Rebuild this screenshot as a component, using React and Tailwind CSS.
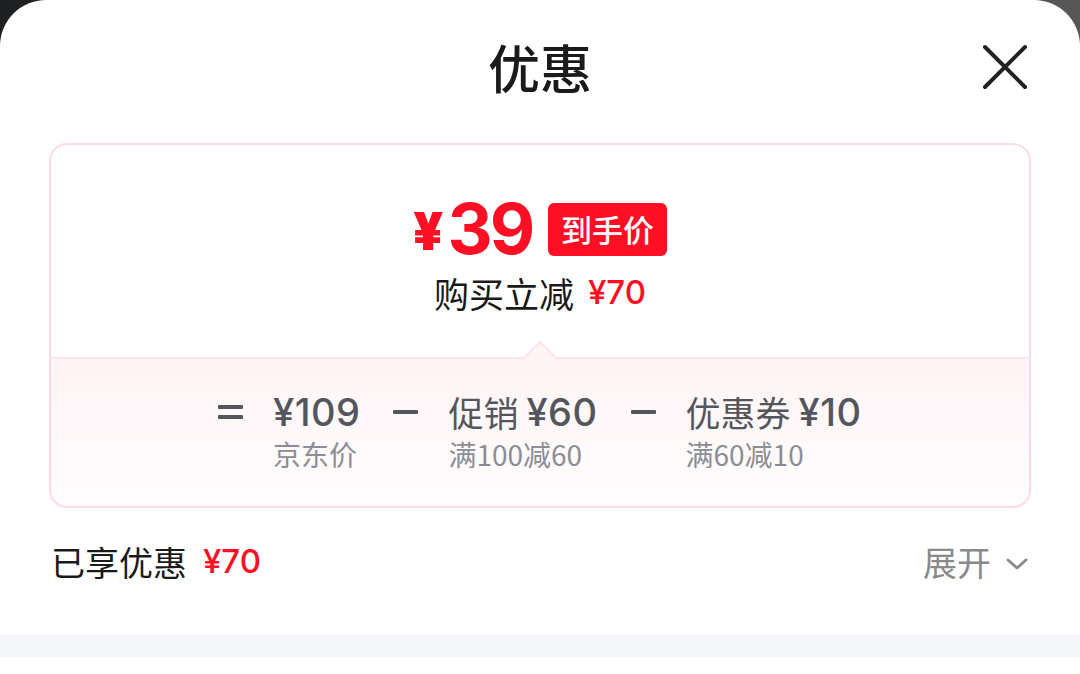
const cn = { fontFamily: '"Noto Sans CJK SC", "Noto Sans", sans-serif' };
const num = { fontFamily: 'Inter, "Noto Sans CJK SC", sans-serif' };

const parts = [
  { op: 'eq', label: null, value: '¥109', sub: '京东价' },
  { op: 'minus', label: '促销', value: '¥60', sub: '满100减60' },
  { op: 'minus', label: '优惠券', value: '¥10', sub: '满60减10' },
];

function CloseIcon() {
  return (
    <svg width="46" height="46" viewBox="0 0 46 46" fill="none">
      <path d="M3 3L43 43M43 3L3 43" stroke="#222" strokeWidth="4" strokeLinecap="round" />
    </svg>
  );
}

function Chevron() {
  return (
    <svg width="24" height="14" viewBox="0 0 24 14" fill="none">
      <path d="M3 3L12 11L21 3" stroke="#8a8a8a" strokeWidth="3" strokeLinecap="round" strokeLinejoin="round" />
    </svg>
  );
}

function Op({ type }) {
  return (
    <div className="w-[25px] h-[44px] flex flex-col justify-center gap-[6px]">
      <div className="h-[4px] bg-[#54565d] rounded-[1px]" />
      {type === 'eq' && <div className="h-[4px] bg-[#54565d] rounded-[1px]" />}
    </div>
  );
}

export default function App() {
  return (
    <div className="w-[1080px] h-[674px] overflow-hidden bg-gradient-to-r from-[#1d1f21] to-[#575757]" style={cn}>
      <div className="bg-white h-full rounded-t-[46px] flex flex-col">
        {/* header */}
        <div className="relative h-[143px] flex items-start justify-center pt-[34px]">
          <h1 className="text-[52px] leading-[66px] font-medium text-[#1a1a1a]">优惠</h1>
          <button className="absolute right-[52px] top-[44px]">
            <CloseIcon />
          </button>
        </div>

        {/* price card */}
        <div className="mx-[49px] h-[365px] border-2 border-[#ffd9e4] rounded-[18px] overflow-hidden flex flex-col">
          <div className="h-[212px] bg-white flex flex-col items-center pt-[54px]">
            <div className="flex items-center h-[60px]">
              <span className="text-[#ff0f23] font-black text-[52px] leading-none mr-[4px] mt-[6px]" style={num}>¥</span>
              <span className="text-[#ff0f23] font-bold text-[70px] leading-none tracking-[-3px]" style={num}>39</span>
              <span className="ml-[16px] bg-[#ff0f23] text-white rounded-[6px] h-[53px] px-[13px] flex items-center text-[31px] font-medium">到手价</span>
            </div>
            <div className="flex items-center mt-[12px] h-[44px]">
              <span className="text-[35px] text-[#1a1a1a]">购买立减</span>
              <span className="ml-[14px] text-[33px] text-[#ff0f23] font-medium" style={num}>¥70</span>
            </div>
          </div>

          <div className="relative flex-1 border-t-2 border-[#ffe6ec] bg-gradient-to-b from-[#fff4f6] to-[#fffdfd]">
            <div className="absolute left-[476px] -top-[13px] w-[26px] h-[26px] rotate-45 bg-[#fff4f6] border-l-2 border-t-2 border-[#ffe6ec]" />
            <div className="flex items-start pl-[167px] pt-[31px]">
              {parts.map((p, i) => (
                <div key={i} className="flex items-start">
                  <Op type={p.op} />
                  <div className={`flex flex-col ml-[30px] ${i === 2 ? '' : 'mr-[33px]'}`}>
                    <div className="flex items-center h-[44px] text-[#54565d]">
                      {p.label && <span className="text-[35px] mr-[8px]">{p.label}</span>}
                      <span className="text-[38px] font-medium tracking-[0.5px]" style={num}>{p.value}</span>
                    </div>
                    <div className="text-[28px] leading-[40px] text-[#8b8e96]">{p.sub}</div>
                  </div>
                </div>
              ))}
            </div>
          </div>
        </div>

        {/* footer */}
        <div className="h-[127px] flex items-start justify-between px-[51px] pt-[28px]">
          <div className="flex items-center">
            <span className="text-[34px] text-[#1a1a1a]">已享优惠</span>
            <span className="ml-[16px] text-[33px] text-[#ff0f23] font-medium" style={num}>¥70</span>
          </div>
          <div className="flex items-center">
            <span className="text-[34px] text-[#8a8a8a]">展开</span>
            <span className="ml-[14px] mt-[4px]"><Chevron /></span>
          </div>
        </div>

        <div className="h-[23px] bg-[#f5f6fa]" />
        <div className="flex-1 bg-white" />
      </div>
    </div>
  );
}
